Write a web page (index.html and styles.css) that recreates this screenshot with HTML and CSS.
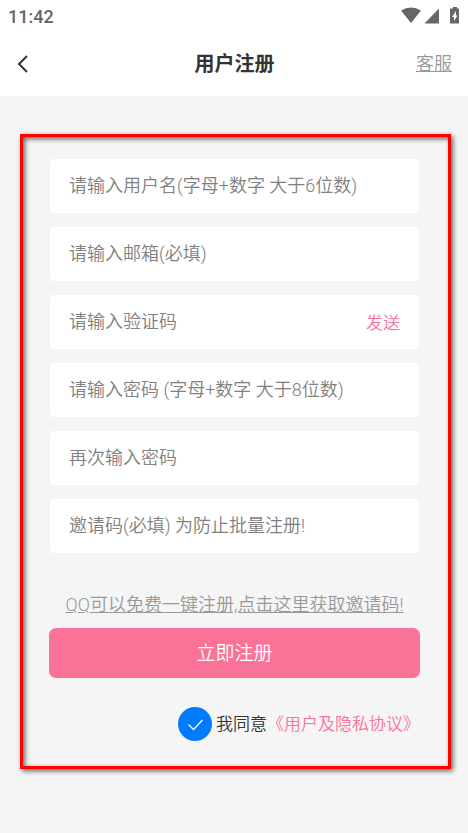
FILE: index.html
```html
<!DOCTYPE html>
<html lang="zh-CN">
<head>
<meta charset="utf-8">
<meta name="viewport" content="width=device-width, initial-scale=1">
<title>用户注册</title>
<link rel="stylesheet" href="styles.css">
</head>
<body>
<header class="top">
  <div class="status">
    <span class="clock">11:42</span>
    <svg class="status-icons" width="60" height="18" viewBox="0 0 60 18" fill="#666" aria-hidden="true">
      <path d="M0 3.500Q10 -2.500 20 3.500L10 16Z"/>
      <path d="M38 1.500V16.500H23.500Z"/>
      <path d="M52 1.500V0H56V1.500H58V16.500H49V1.500ZM55 4L51 10H53V14L56.500 8.500H55Z" fill-rule="evenodd"/>
    </svg>
  </div>
  <nav class="bar">
    <button class="back" type="button" aria-label="返回">
      <svg width="12" height="18" viewBox="0 0 12 18" fill="none" stroke="#333" stroke-width="2" aria-hidden="true"><path d="M10 1L2 9L10 17"/></svg>
    </button>
    <h1 class="title">用户注册</h1>
    <a class="service" href="#service">客服</a>
  </nav>
</header>
<main class="page">
  <form class="panel">
    <div class="fields">
      <div class="field"><input class="input" type="text" aria-label="用户名" placeholder="请输入用户名(字母+数字 大于6位数)"></div>
      <div class="field"><input class="input" type="email" aria-label="邮箱" placeholder="请输入邮箱(必填)"></div>
      <div class="field"><input class="input" type="text" aria-label="验证码" placeholder="请输入验证码"><button class="send" type="button">发送</button></div>
      <div class="field"><input class="input" type="password" aria-label="密码" placeholder="请输入密码 (字母+数字 大于8位数)"></div>
      <div class="field"><input class="input" type="password" aria-label="再次输入密码" placeholder="再次输入密码"></div>
      <div class="field"><input class="input" type="text" aria-label="邀请码" placeholder="邀请码(必填) 为防止批量注册!"></div>
    </div>
    <a class="invite" href="#invite">QQ可以免费一键注册,点击这里获取邀请码!</a>
    <button class="submit" type="submit">立即注册</button>
    <div class="agree">
      <span class="check">
        <input class="check-input" id="agree" type="checkbox" checked>
        <svg class="check-mark" width="34" height="34" viewBox="0 0 34 34" fill="none" stroke="#fff" stroke-width="1.300" aria-hidden="true"><path d="M10.500 17.500L15.500 22.500L24.500 13"/></svg>
      </span>
      <label class="agree-text" for="agree">我同意</label><a class="terms" href="#terms">《用户及隐私协议》</a>
    </div>
  </form>
</main>
</body>
</html>
```

FILE: styles.css
```css
* {
  box-sizing: border-box;
}

body {
  margin: 0;
  min-height: 100vh;
  background: #f5f5f5;
  color: #333;
  font-family: Roboto, "Noto Sans CJK SC", sans-serif;
  font-size: 18px;
  font-weight: 350;
}

button,
input {
  margin: 0;
  padding: 0;
  border: 0;
  background: none;
  font: inherit;
}

.top {
  background: #fff;
}

.status {
  display: flex;
  align-items: center;
  justify-content: space-between;
  height: 32px;
  padding: 0 7px 0 8px;
  color: #666;
}

.clock {
  font-weight: 500;
}

.status-icons {
  display: block;
}

.bar {
  display: grid;
  grid-template-columns: 1fr auto 1fr;
  align-items: center;
  height: 64px;
  padding: 0 16px 0 17px;
}

.back {
  justify-self: start;
  display: flex;
}

.title {
  margin: 0;
  font-size: 20px;
  font-weight: 700;
  line-height: 28px;
}

.service {
  justify-self: end;
  color: #999;
  line-height: 28px;
}

.page {
  padding: 38px 17px 64px 20px;
}

.panel {
  display: flex;
  flex-direction: column;
  padding: 22px 28px 25px 26px;
  border: 3px solid #f00;
  box-shadow: 2px 2px 5px rgba(0, 0, 0, 0.6), inset 2px 2px 5px rgba(0, 0, 0, 0.6);
}

.fields {
  display: flex;
  flex-direction: column;
  gap: 14px;
}

.field {
  display: flex;
  align-items: center;
  height: 54px;
  margin: 0 1px;
  padding: 0 19px 2px;
  border-radius: 4px;
  background: #fff;
}

.input {
  flex: 1;
  min-width: 0;
  height: 100%;
  outline: 0;
  color: #333;
}

.input::placeholder {
  color: #808080;
  opacity: 1;
}

.send {
  color: #fb7299;
  font-size: 17px;
}

.invite {
  margin: 37px 0 8px;
  color: #999;
  line-height: 30px;
  text-align: center;
}

.submit {
  height: 50px;
  padding-bottom: 3px;
  border-radius: 7px;
  background: #fb7299;
  color: #fff;
  font-size: 19px;
}

.agree {
  display: flex;
  align-items: center;
  justify-content: flex-end;
  margin-top: 29px;
  font-size: 17px;
  line-height: 28px;
}

.check {
  position: relative;
  width: 34px;
  height: 34px;
  margin-right: 4px;
}

.check-input {
  display: block;
  width: 34px;
  height: 34px;
  border-radius: 50%;
  background: #007aff;
  appearance: none;
}

.check-mark {
  position: absolute;
  inset: 0;
  pointer-events: none;
}

.terms {
  color: #fb7299;
  text-decoration: none;
}
```
